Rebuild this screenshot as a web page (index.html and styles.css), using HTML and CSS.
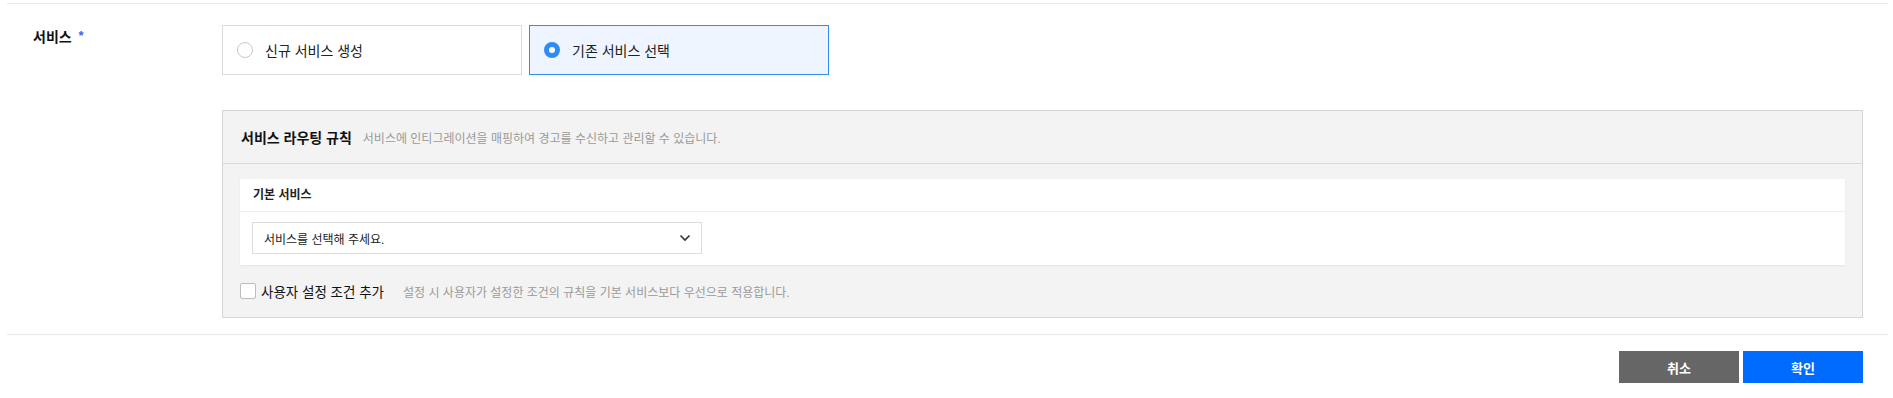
FILE: index.html
```html
<!DOCTYPE html>
<html lang="ko">

<head>
    <meta charset="UTF-8">
    <title>서비스</title>
    <link rel="stylesheet" href="styles.css">
</head>

<body>
    <div class="form">
        <div class="row">
            <div class="label">서비스 <em>*</em></div>
            <div class="field">
                <div class="choices">
                    <label class="choice">
                        <span class="radio"></span>
                        <span class="choice-text">신규 서비스 생성</span>
                    </label>
                    <label class="choice on">
                        <span class="radio"></span>
                        <span class="choice-text">기존 서비스 선택</span>
                    </label>
                </div>

                <div class="panel">
                    <div class="panel-head">
                        <strong>서비스 라우팅 규칙</strong>
                        <span class="desc">서비스에 인티그레이션을 매핑하여 경고를 수신하고 관리할 수 있습니다.</span>
                    </div>
                    <div class="panel-body">
                        <div class="card">
                            <div class="card-head">기본 서비스</div>
                            <div class="card-body">
                                <div class="select">
                                    <span>서비스를 선택해 주세요.</span>
                                    <svg width="12" height="8" viewBox="0 0 12 8">
                                        <path d="M1.5 1.5 L6 6 L10.5 1.5" fill="none" stroke="#333" stroke-width="1.6"/>
                                    </svg>
                                </div>
                            </div>
                        </div>
                        <div class="opt">
                            <span class="check"></span>
                            <span class="opt-text">사용자 설정 조건 추가</span>
                            <span class="desc">설정 시 사용자가 설정한 조건의 규칙을 기본 서비스보다 우선으로 적용합니다.</span>
                        </div>
                    </div>
                </div>
            </div>
        </div>

        <div class="foot">
            <button class="btn cancel">취소</button>
            <button class="btn ok">확인</button>
        </div>
    </div>
</body>

</html>
```

FILE: styles.css
```css
body {
    margin: 0;
    font-family: "Liberation Sans", "Noto Sans CJK KR", sans-serif;
    color: #222;
    background: #fff;
}

.form {
    margin: 3px 5px 0 7px;
    border-top: 1px solid #e8e8e8;
}

.row {
    display: flex;
    padding: 21px 0 16px;
    border-bottom: 1px solid #e8e8e8;
}

.label {
    width: 189px;
    padding: 1px 0 0 26px;
    font-size: 14px;
    font-weight: bold;
    line-height: 20px;
    color: #111;
}

.label em {
    font-style: normal;
    color: #2a6cf0;
    font-size: 13px;
    vertical-align: 2px;
    margin-left: 3px;
}

.field {
    flex: 1;
    padding-right: 25px;
}

.choices {
    display: flex;
    gap: 7px;
}

.choice {
    width: 300px;
    height: 50px;
    box-sizing: border-box;
    border: 1px solid #dcdcdc;
    display: flex;
    align-items: center;
    padding-left: 14px;
    font-size: 14px;
    color: #222;
    cursor: pointer;
}

.choice.on {
    border-color: #2f8cf3;
    background: #eef5ff;
}

.radio {
    width: 16px;
    height: 16px;
    box-sizing: border-box;
    border: 1px solid #c8c8c8;
    border-radius: 50%;
    background: #fff;
    margin-right: 12px;
}

.choice.on .radio {
    border: 5px solid #2f8cf3;
}

.panel {
    margin-top: 35px;
    border: 1px solid #d6d6d6;
    background: #f3f3f3;
}

.panel-head {
    height: 52px;
    display: flex;
    align-items: center;
    padding-left: 18px;
    border-bottom: 1px solid #d9d9d9;
}

.panel-head strong {
    font-size: 14px;
    color: #111;
}

.desc {
    font-size: 12px;
    color: #9a9a9a;
    margin-left: 11px;
}

.panel-body {
    padding: 15px 17px 0;
}

.card {
    background: #fff;
    box-shadow: 0 1px 2px rgba(0, 0, 0, 0.06);
}

.card-head {
    height: 32px;
    line-height: 32px;
    padding-left: 13px;
    font-size: 12px;
    font-weight: bold;
    color: #222;
    border-bottom: 1px solid #efefef;
}

.card-body {
    padding: 10px 12px 11px;
}

.select {
    width: 450px;
    height: 32px;
    box-sizing: border-box;
    border: 1px solid #dcdcdc;
    display: flex;
    align-items: center;
    justify-content: space-between;
    padding: 0 10px 0 11px;
    font-size: 12px;
    color: #222;
}

.opt {
    display: flex;
    align-items: center;
    height: 26px;
    padding: 13px 0 13px;
}

.check {
    width: 16px;
    height: 16px;
    box-sizing: border-box;
    border: 1px solid #bdbdbd;
    border-radius: 2px;
    background: #fff;
    margin-right: 5px;
}

.opt-text {
    font-size: 13.5px;
    color: #111;
}

.opt .desc {
    margin-left: 19px;
}

.foot {
    display: flex;
    justify-content: flex-end;
    gap: 4px;
    padding: 16px 25px 0 0;
}

.btn {
    width: 120px;
    height: 32px;
    border: none;
    color: #fff;
    font-family: inherit;
    font-size: 13px;
    font-weight: bold;
    cursor: pointer;
}

.btn.cancel {
    background: #666;
}

.btn.ok {
    background: #006cff;
}
```
